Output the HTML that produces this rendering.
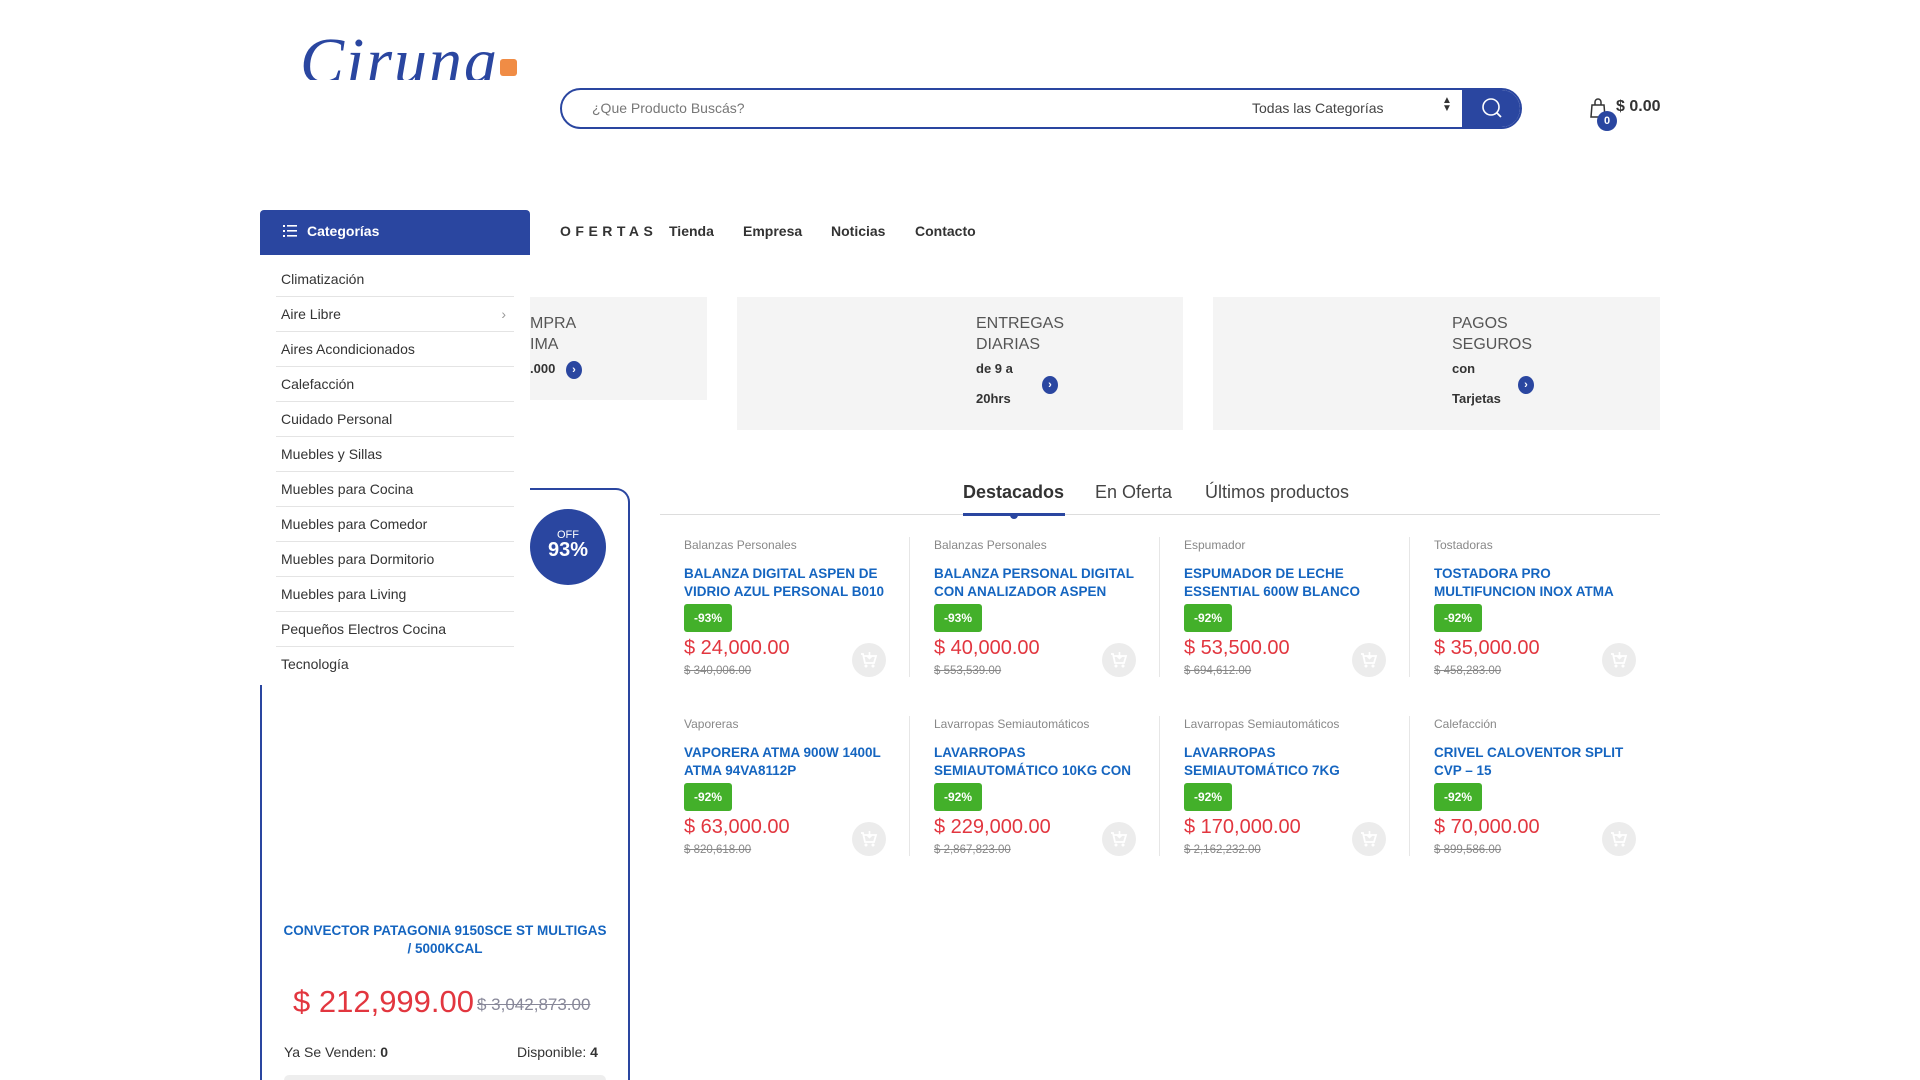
<!DOCTYPE html>
<html><head><meta charset="utf-8"><style>
*{margin:0;padding:0;box-sizing:border-box}
html{width:1920px;height:1080px;overflow:hidden}
body{width:1920px;height:1080px;overflow:hidden;background:#fff;font-family:"Liberation Sans",sans-serif;color:#333;position:relative}
.a{position:absolute;white-space:nowrap}
.cat{position:absolute;left:276px;width:238px;height:35px;border-bottom:1px solid #e4e4e4;font-size:14px;color:#333;padding-left:5px;line-height:34px}
.ban{position:absolute;background:#f4f4f4}
.bt{font-size:16px;color:#555;line-height:21px}
.bb{font-size:13px;font-weight:bold;color:#333}
.arr{position:absolute;width:16px;height:18px;border-radius:50%;background:#2a46a0;color:#fff;font-size:11px;text-align:center;line-height:18px;font-weight:bold}
.pc{position:absolute;font-size:12px;color:#888}
.pt{position:absolute;font-size:13.5px;font-weight:bold;color:#1565c0;line-height:18px;width:215px;white-space:normal}
.bd{position:absolute;background:#43b02a;color:#fff;font-size:12px;font-weight:bold;width:48px;height:28px;border-radius:3px;text-align:center;line-height:28px}
.pr{position:absolute;font-size:20px;color:#e2363f}
.op{position:absolute;font-size:11.5px;color:#888;text-decoration:line-through}
.cb{position:absolute;width:34px;height:34px;border-radius:50%;background:#ececec}
.sep{position:absolute;width:1px;background:#e6e6e6}
</style></head><body>
<svg width="0" height="0" style="position:absolute"><defs><g id="cart"><path d="M9 11 H11 L13 20 H22 L24 13 H12" fill="none" stroke="#fff" stroke-width="1.8"/><circle cx="14" cy="23" r="1.5" fill="#fff"/><circle cx="21" cy="23" r="1.5" fill="#fff"/><path d="M17.5 9 V15 M15 13 L17.5 15.5 L20 13" fill="none" stroke="#fff" stroke-width="1.6"/></g></defs></svg>
<div class="a" style="left:300px;top:22px;height:58px;overflow:hidden;font-family:'Liberation Serif',serif;font-style:italic;font-size:66px;color:#2a46a0;letter-spacing:2px;line-height:80px">Ciruna</div>
<div class="a" style="left:500px;top:59px;width:17px;height:17px;background:#f08c45;border-radius:3px"></div>
<div class="a" style="left:560px;top:88px;width:962px;height:41px;border:2px solid #2a46a0;border-radius:21px;overflow:hidden">
 <div class="a" style="left:30px;top:10px;font-size:14px;color:#777">¿Que Producto Buscás?</div>
 <div class="a" style="left:690px;top:10px;font-size:14px;color:#444">Todas las Categorías</div>
 <div class="a" style="left:880px;top:7px;font-size:10px;color:#333;line-height:8px">▲<br>▼</div>
 <div class="a" style="left:900px;top:-2px;width:62px;height:41px;background:#2a46a0">
  <svg width="62" height="41" viewBox="0 0 62 41"><circle cx="29" cy="19" r="8" fill="none" stroke="#fff" stroke-width="1.6"/><line x1="35" y1="25" x2="39" y2="29" stroke="#fff" stroke-width="1.8"/></svg>
 </div>
</div>
<svg class="a" style="left:1589px;top:97px" width="22" height="22" viewBox="0 0 22 22"><path d="M3 8 L15 8 L16 20 L2 20 Z" fill="none" stroke="#333" stroke-width="1.5"/><path d="M6 8 V5 A3 3 0 0 1 12 5 V8" fill="none" stroke="#333" stroke-width="1.5"/></svg>
<div class="a" style="left:1597px;top:111px;width:20px;height:20px;border-radius:50%;background:#2a46a0;color:#fff;font-size:11px;font-weight:bold;text-align:center;line-height:20px">0</div>
<div class="a" style="left:1616px;top:98px;font-size:16px;font-weight:bold;color:#333">$ 0.00</div>
<div class="a" style="left:260px;top:210px;width:270px;height:45px;background:#2a46a0;border-radius:4px 4px 0 0"></div>
<svg class="a" style="left:283px;top:225px" width="14" height="12"><g fill="#fff"><rect x="0" y="0" width="2" height="2"/><rect x="0" y="5" width="2" height="2"/><rect x="0" y="10" width="2" height="2"/><rect x="4" y="0" width="10" height="1.6"/><rect x="4" y="5" width="10" height="1.6"/><rect x="4" y="10" width="10" height="1.6"/></g></svg>
<div class="a" style="left:307px;top:223px;font-size:14px;font-weight:bold;color:#fff">Categorías</div>
<div class="a" style="left:560px;top:223px;font-size:14px;font-weight:bold;color:#333;letter-spacing:4.5px">OFERTAS</div>
<div class="a" style="left:669px;top:223px;font-size:14px;font-weight:bold;color:#333">Tienda</div>
<div class="a" style="left:743px;top:223px;font-size:14px;font-weight:bold;color:#333">Empresa</div>
<div class="a" style="left:831px;top:223px;font-size:14px;font-weight:bold;color:#333">Noticias</div>
<div class="a" style="left:915px;top:223px;font-size:14px;font-weight:bold;color:#333">Contacto</div>
<div class="ban" style="left:530px;top:297px;width:177px;height:103px">
 <div class="a bt" style="left:0;top:16px">MPRA<br>IMA</div>
 <div class="a bb" style="left:0;top:64px">.000</div>
 <div class="arr" style="left:36px;top:64px">›</div>
</div>
<div class="ban" style="left:737px;top:297px;width:446px;height:133px">
 <div class="a bt" style="left:239px;top:16px">ENTREGAS<br>DIARIAS</div>
 <div class="a bb" style="left:239px;top:64px">de 9 a</div>
 <div class="a bb" style="left:239px;top:94px">20hrs</div>
 <div class="arr" style="left:305px;top:79px">›</div>
</div>
<div class="ban" style="left:1213px;top:297px;width:447px;height:133px">
 <div class="a bt" style="left:239px;top:16px">PAGOS<br>SEGUROS</div>
 <div class="a bb" style="left:239px;top:64px">con</div>
 <div class="a bb" style="left:239px;top:94px">Tarjetas</div>
 <div class="arr" style="left:305px;top:79px">›</div>
</div>
<div class="a" style="left:260px;top:488px;width:370px;height:592px;border:2px solid #2a46a0;border-bottom:none;border-radius:0 14px 0 0"></div>
<div class="a" style="left:250px;top:480px;width:280px;height:205px;background:#fff"></div>
<div class="cat" style="top:262px">Climatización</div>
<div class="cat" style="top:297px">Aire Libre<span style="position:absolute;right:8px;color:#999">›</span></div>
<div class="cat" style="top:332px">Aires Acondicionados</div>
<div class="cat" style="top:367px">Calefacción</div>
<div class="cat" style="top:402px">Cuidado Personal</div>
<div class="cat" style="top:437px">Muebles y Sillas</div>
<div class="cat" style="top:472px">Muebles para Cocina</div>
<div class="cat" style="top:507px">Muebles para Comedor</div>
<div class="cat" style="top:542px">Muebles para Dormitorio</div>
<div class="cat" style="top:577px">Muebles para Living</div>
<div class="cat" style="top:612px">Pequeños Electros Cocina</div>
<div class="cat" style="top:647px;border:none">Tecnología</div>
<div class="a" style="left:530px;top:509px;width:76px;height:76px;border-radius:50%;background:#2a46a0;color:#fff;text-align:center">
 <div style="font-size:11px;margin-top:20px">OFF</div><div style="font-size:20px;font-weight:bold;line-height:18px">93%</div></div>
<div class="a" style="left:282px;top:922px;width:326px;text-align:center;font-size:13.5px;font-weight:bold;color:#1565c0;line-height:18px;white-space:normal">CONVECTOR PATAGONIA 9150SCE ST MULTIGAS / 5000KCAL</div>
<div class="a" style="left:293px;top:984px;font-size:31px;color:#e2363f">$ 212,999.00</div>
<div class="a" style="left:477px;top:995px;font-size:17px;color:#889;text-decoration:line-through">$ 3,042,873.00</div>
<div class="a" style="left:284px;top:1044px;font-size:14px;color:#333">Ya Se Venden: <b>0</b></div>
<div class="a" style="left:517px;top:1044px;font-size:14px;color:#333">Disponible: <b>4</b></div>
<div class="a" style="left:284px;top:1075px;width:322px;height:5px;background:#eee;border-radius:5px 5px 0 0"></div>
<div class="a" style="left:660px;top:514px;width:1000px;height:1px;background:#ddd"></div>
<div class="a" style="left:963px;top:482px;font-size:18px;font-weight:bold;color:#333">Destacados</div>
<div class="a" style="left:963px;top:513px;width:102px;height:3px;background:#2a46a0"></div>
<div class="a" style="left:1010px;top:513px;width:8px;height:6px;border-radius:0 0 4px 4px;background:#2a46a0"></div>
<div class="a" style="left:1095px;top:482px;font-size:18px;color:#444">En Oferta</div>
<div class="a" style="left:1205px;top:482px;font-size:18px;color:#444">Últimos productos</div>
<div class="sep" style="left:909px;top:537px;height:140px"></div><div class="sep" style="left:1159px;top:537px;height:140px"></div><div class="sep" style="left:1409px;top:537px;height:140px"></div>
<div class="sep" style="left:909px;top:716px;height:140px"></div><div class="sep" style="left:1159px;top:716px;height:140px"></div><div class="sep" style="left:1409px;top:716px;height:140px"></div>

<div class="pc" style="left:684px;top:538px">Balanzas Personales</div>
<div class="pt" style="left:684px;top:565px">BALANZA DIGITAL ASPEN DE VIDRIO AZUL PERSONAL B010</div>
<div class="bd" style="left:684px;top:604px">-93%</div>
<div class="pr" style="left:684px;top:637px">$ 24,000.00</div>
<div class="op" style="left:684px;top:665px">$ 340,006.00</div>
<svg class="cb" style="left:852px;top:643px" viewBox="0 0 34 34"><use href="#cart"/></svg>

<div class="pc" style="left:934px;top:538px">Balanzas Personales</div>
<div class="pt" style="left:934px;top:565px">BALANZA PERSONAL DIGITAL CON ANALIZADOR ASPEN</div>
<div class="bd" style="left:934px;top:604px">-93%</div>
<div class="pr" style="left:934px;top:637px">$ 40,000.00</div>
<div class="op" style="left:934px;top:665px">$ 553,539.00</div>
<svg class="cb" style="left:1102px;top:643px" viewBox="0 0 34 34"><use href="#cart"/></svg>

<div class="pc" style="left:1184px;top:538px">Espumador</div>
<div class="pt" style="left:1184px;top:565px">ESPUMADOR DE LECHE ESSENTIAL 600W BLANCO</div>
<div class="bd" style="left:1184px;top:604px">-92%</div>
<div class="pr" style="left:1184px;top:637px">$ 53,500.00</div>
<div class="op" style="left:1184px;top:665px">$ 694,612.00</div>
<svg class="cb" style="left:1352px;top:643px" viewBox="0 0 34 34"><use href="#cart"/></svg>

<div class="pc" style="left:1434px;top:538px">Tostadoras</div>
<div class="pt" style="left:1434px;top:565px">TOSTADORA PRO MULTIFUNCION INOX ATMA</div>
<div class="bd" style="left:1434px;top:604px">-92%</div>
<div class="pr" style="left:1434px;top:637px">$ 35,000.00</div>
<div class="op" style="left:1434px;top:665px">$ 458,283.00</div>
<svg class="cb" style="left:1602px;top:643px" viewBox="0 0 34 34"><use href="#cart"/></svg>

<div class="pc" style="left:684px;top:717px">Vaporeras</div>
<div class="pt" style="left:684px;top:744px">VAPORERA ATMA 900W 1400L ATMA 94VA8112P</div>
<div class="bd" style="left:684px;top:783px">-92%</div>
<div class="pr" style="left:684px;top:816px">$ 63,000.00</div>
<div class="op" style="left:684px;top:844px">$ 820,618.00</div>
<svg class="cb" style="left:852px;top:822px" viewBox="0 0 34 34"><use href="#cart"/></svg>

<div class="pc" style="left:934px;top:717px">Lavarropas Semiautomáticos</div>
<div class="pt" style="left:934px;top:744px">LAVARROPAS SEMIAUTOMÁTICO 10KG CON</div>
<div class="bd" style="left:934px;top:783px">-92%</div>
<div class="pr" style="left:934px;top:816px">$ 229,000.00</div>
<div class="op" style="left:934px;top:844px">$ 2,867,823.00</div>
<svg class="cb" style="left:1102px;top:822px" viewBox="0 0 34 34"><use href="#cart"/></svg>

<div class="pc" style="left:1184px;top:717px">Lavarropas Semiautomáticos</div>
<div class="pt" style="left:1184px;top:744px">LAVARROPAS SEMIAUTOMÁTICO 7KG</div>
<div class="bd" style="left:1184px;top:783px">-92%</div>
<div class="pr" style="left:1184px;top:816px">$ 170,000.00</div>
<div class="op" style="left:1184px;top:844px">$ 2,162,232.00</div>
<svg class="cb" style="left:1352px;top:822px" viewBox="0 0 34 34"><use href="#cart"/></svg>

<div class="pc" style="left:1434px;top:717px">Calefacción</div>
<div class="pt" style="left:1434px;top:744px">CRIVEL CALOVENTOR SPLIT CVP – 15</div>
<div class="bd" style="left:1434px;top:783px">-92%</div>
<div class="pr" style="left:1434px;top:816px">$ 70,000.00</div>
<div class="op" style="left:1434px;top:844px">$ 899,586.00</div>
<svg class="cb" style="left:1602px;top:822px" viewBox="0 0 34 34"><use href="#cart"/></svg>
</body></html>
